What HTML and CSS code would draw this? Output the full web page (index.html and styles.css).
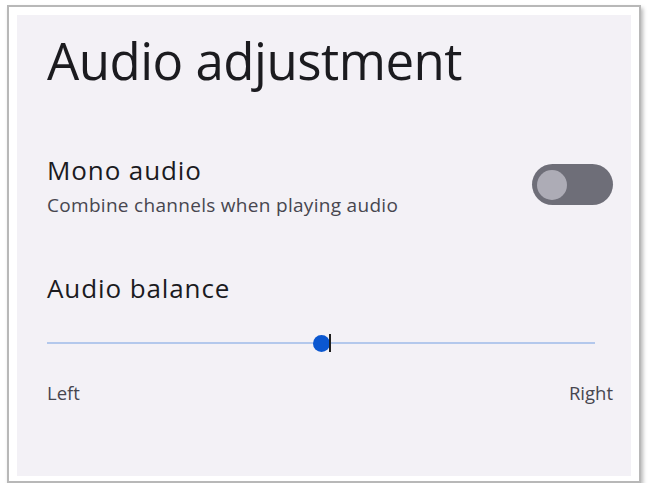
FILE: index.html
```html
<!DOCTYPE html>
<html lang="en">
<head>
<meta charset="utf-8">
<title>Audio adjustment</title>
<link rel="stylesheet" href="styles.css">
</head>
<body>
  <div class="frame">
    <main class="panel">
      <h1 class="title">Audio adjustment</h1>

      <section class="row">
        <div class="row-text">
          <div class="row-title">Mono audio</div>
          <div class="row-summary">Combine channels when playing audio</div>
        </div>
        <div class="switch" role="switch" aria-checked="false">
          <span class="switch-knob"></span>
        </div>
      </section>

      <section class="balance">
        <div class="row-title">Audio balance</div>
        <div class="slider">
          <div class="slider-track"></div>
          <div class="slider-thumb"></div>
          <div class="slider-caret"></div>
        </div>
        <div class="slider-labels">
          <span>Left</span>
          <span>Right</span>
        </div>
      </section>
    </main>
  </div>
</body>
</html>
```

FILE: styles.css
```css
html, body {
  margin: 0;
  padding: 0;
  background: #ffffff;
}

body {
  font-family: "Open Sans", Roboto, sans-serif;
  color: #1b1b21;
  padding: 5px 0 0 7px;
}

.frame {
  width: 634px;
  height: 478px;
  border: 2px solid #b8b8b8;
  background: #ffffff;
  box-shadow: 2px 3px 4px rgba(0, 0, 0, 0.28);
  padding: 8px 8px 0 8px;
  box-sizing: border-box;
}

.panel {
  background: #f3f1f6;
  height: 461px;
  box-sizing: border-box;
  padding: 0 18px 0 30px;
}

.title {
  margin: 0;
  padding-top: 13px;
  font-weight: 400;
  font-size: 51px;
  line-height: 64px;
  color: #1b1b1f;
  letter-spacing: -0.5px;
}

.row {
  display: flex;
  align-items: flex-start;
  justify-content: space-between;
  margin-top: 63px;
}

.row-title {
  font-size: 26px;
  line-height: 30px;
  color: #1b1b1f;
  letter-spacing: 0.9px;
}

.row-summary {
  font-size: 19px;
  line-height: 24px;
  color: #47464f;
  letter-spacing: 0.3px;
  margin-top: 8px;
}

.switch {
  width: 81px;
  height: 41px;
  border-radius: 21px;
  background: #6e6e78;
  display: flex;
  align-items: center;
  padding-left: 5px;
  box-sizing: border-box;
  margin-top: 9px;
}

.switch-knob {
  width: 30px;
  height: 30px;
  border-radius: 50%;
  background: #adacb6;
}

.balance {
  margin-top: 56px;
}

.slider {
  position: relative;
  height: 30px;
  margin-top: 26px;
  margin-right: 18px;
}

.slider-track {
  position: absolute;
  left: 0;
  right: 0;
  top: 13px;
  height: 2px;
  background: #b3c8ec;
}

.slider-thumb {
  position: absolute;
  left: 266px;
  top: 6px;
  width: 17px;
  height: 17px;
  border-radius: 50%;
  background: #0b57d0;
}

.slider-caret {
  position: absolute;
  left: 282px;
  top: 5px;
  width: 2px;
  height: 18px;
  background: #1f1f1f;
}

.slider-labels {
  display: flex;
  justify-content: space-between;
  font-size: 18.5px;
  line-height: 24px;
  color: #47464f;
  margin-top: 22px;
}
```
